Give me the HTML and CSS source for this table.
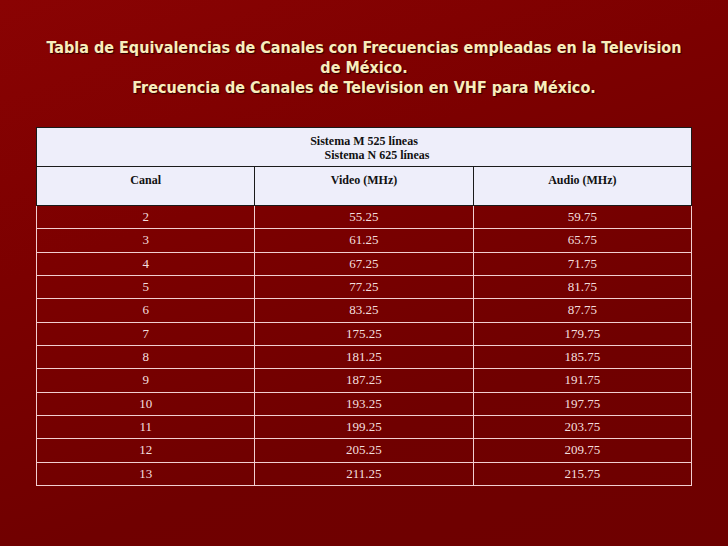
FILE: index.html
```html
<!DOCTYPE html>
<html lang="es">
<head>
<meta charset="utf-8">
<title>Frecuencia de Canales</title>
<link rel="stylesheet" href="styles.css">
</head>
<body>
<div class="slide">
  <h1 class="title">Tabla de Equivalencias de Canales con Frecuencias empleadas en la Television<br>de México.<br>Frecuencia de Canales de Television en VHF para México.</h1>
  <table class="freq">
    <thead>
      <tr class="sys">
        <th colspan="3"><span class="l1">Sistema M 525 líneas</span><span class="l2">Sistema N 625 líneas</span></th>
      </tr>
      <tr class="cols">
        <th>Canal</th>
        <th>Video (MHz)</th>
        <th>Audio (MHz)</th>
      </tr>
    </thead>
    <tbody>
      <tr><td>2</td><td>55.25</td><td>59.75</td></tr>
      <tr><td>3</td><td>61.25</td><td>65.75</td></tr>
      <tr><td>4</td><td>67.25</td><td>71.75</td></tr>
      <tr><td>5</td><td>77.25</td><td>81.75</td></tr>
      <tr><td>6</td><td>83.25</td><td>87.75</td></tr>
      <tr><td>7</td><td>175.25</td><td>179.75</td></tr>
      <tr><td>8</td><td>181.25</td><td>185.75</td></tr>
      <tr><td>9</td><td>187.25</td><td>191.75</td></tr>
      <tr><td>10</td><td>193.25</td><td>197.75</td></tr>
      <tr><td>11</td><td>199.25</td><td>203.75</td></tr>
      <tr><td>12</td><td>205.25</td><td>209.75</td></tr>
      <tr><td>13</td><td>211.25</td><td>215.75</td></tr>
    </tbody>
  </table>
</div>
</body>
</html>
```
FILE: styles.css
```css
html, body {
  margin: 0;
  padding: 0;
}
body {
  width: 728px;
  height: 546px;
  overflow: hidden;
  background: linear-gradient(160deg, #8a0303 0%, #7c0000 35%, #700000 70%, #6e0000 100%);
}
.slide {
  padding-top: 38px;
}
.title {
  margin: 0 0 29px 0;
  font-family: "DejaVu Sans Condensed", "DejaVu Sans", sans-serif;
  font-weight: bold;
  font-size: 16px;
  line-height: 20px;
  text-align: center;
  color: #f9edbc;
  text-shadow: 1px 1px 1px #2a0000;
}
.freq {
  width: 656px;
  margin: 0 auto;
  border-collapse: collapse;
  table-layout: fixed;
  font-family: "Liberation Serif", "Times New Roman", serif;
  font-size: 12px;
}
.freq th {
  background: #eeeefa;
  color: #111;
  font-weight: bold;
  border: 1px solid #1a1a1a;
  vertical-align: top;
}
.sys th {
  height: 39px;
  padding: 6px 0 0 0;
  box-sizing: border-box;
  line-height: 14px;
}
.sys .l1, .sys .l2 {
  display: block;
}
.sys .l2 {
  padding-left: 26px;
}
.cols th {
  height: 39px;
  box-sizing: border-box;
  padding: 6px 0 0 0;
  line-height: 14px;
}
.freq tbody td {
  border: 1px solid #f2cdd0;
  color: #f3dede;
  font-size: 13px;
  text-align: center;
  height: 23.33px;
  box-sizing: border-box;
  padding: 0;
  line-height: 14px;
  vertical-align: middle;
}
```
